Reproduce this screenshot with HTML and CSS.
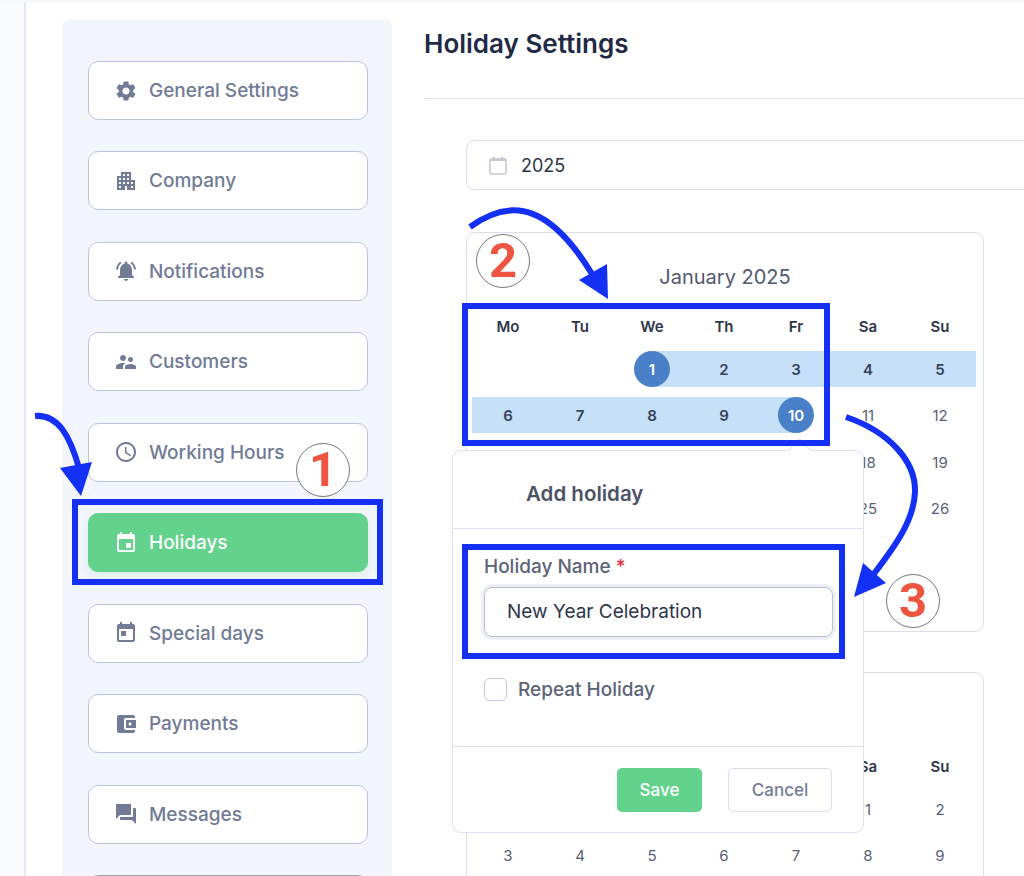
FILE: index.html
```html
<!DOCTYPE html>
<html lang="en">
    <head>
        <meta charset="UTF-8" />
        <meta name="viewport" content="width=device-width, initial-scale=1.0" />
        <title>Holiday Settings</title>
        <link rel="stylesheet" href="styles.css">
    </head>
    <body>
        <div class="page">
            <div class="strip"></div>

            <!-- sidebar -->
            <nav class="side">
                <a class="side-item">
                    <svg class="ico" viewBox="0 0 24 24"><path d="M19.14 12.94c.04-.3.06-.61.06-.94 0-.32-.02-.64-.07-.94l2.03-1.58c.18-.14.23-.41.12-.61l-1.92-3.32c-.12-.22-.37-.29-.59-.22l-2.39.96c-.5-.38-1.03-.7-1.62-.94l-.36-2.54c-.04-.24-.24-.41-.48-.41h-3.84c-.24 0-.43.17-.47.41l-.36 2.54c-.59.24-1.13.57-1.62.94l-2.39-.96c-.22-.08-.47 0-.59.22L2.74 8.87c-.12.21-.08.47.12.61l2.03 1.58c-.05.3-.09.63-.09.94s.02.64.07.94l-2.03 1.58c-.18.14-.23.41-.12.61l1.92 3.32c.12.22.37.29.59.22l2.39-.96c.5.38 1.03.7 1.62.94l.36 2.54c.05.24.24.41.48.41h3.84c.24 0 .44-.17.47-.41l.36-2.54c.59-.24 1.13-.56 1.62-.94l2.39.96c.22.08.47 0 .59-.22l1.92-3.32c.12-.22.07-.47-.12-.61l-2.01-1.58zM12 15.6c-1.98 0-3.6-1.62-3.6-3.6s1.62-3.6 3.6-3.6 3.6 1.62 3.6 3.6-1.62 3.6-3.6 3.6z"/></svg>
                    General Settings
                </a>
                <a class="side-item">
                    <svg class="ico" viewBox="0 0 24 24"><path d="M17 11V3H7v4H3v14h8v-4h2v4h8V11h-4zM7 19H5v-2h2v2zm0-4H5v-2h2v2zm0-4H5V9h2v2zm4 4H9v-2h2v2zm0-4H9V9h2v2zm0-4H9V5h2v2zm4 8h-2v-2h2v2zm0-4h-2V9h2v2zm0-4h-2V5h2v2zm4 12h-2v-2h2v2zm0-4h-2v-2h2v2z"/></svg>
                    Company
                </a>
                <a class="side-item">
                    <svg class="ico" viewBox="0 0 24 24"><path d="M7.58 4.08 6.15 2.65C3.75 4.48 2.17 7.3 2.03 10.5h2c.15-2.65 1.51-4.97 3.55-6.42zm12.39 6.42h2c-.15-3.2-1.73-6.02-4.12-7.85l-1.42 1.43c2.02 1.45 3.39 3.77 3.54 6.42zM18 11c0-3.07-1.64-5.64-4.5-6.32V4c0-.83-.67-1.5-1.5-1.5s-1.5.67-1.5 1.5v.68C7.63 5.36 6 7.92 6 11v5l-2 2v1h16v-1l-2-2v-5zm-6 11c.14 0 .27-.01.4-.04.65-.14 1.18-.58 1.44-1.18.1-.24.15-.5.15-.78h-4c.01 1.1.9 2 2.01 2z"/></svg>
                    Notifications
                </a>
                <a class="side-item">
                    <svg class="ico" viewBox="0 0 24 24"><path d="M16.5 12c1.38 0 2.49-1.12 2.49-2.5S17.88 7 16.5 7C15.12 7 14 8.12 14 9.5s1.12 2.5 2.5 2.5zM9 11c1.66 0 2.99-1.34 2.99-3S10.66 5 9 5C7.34 5 6 6.34 6 8s1.34 3 3 3zm7.5 3c-1.83 0-5.5.92-5.5 2.75V19h11v-2.25c0-1.83-3.67-2.75-5.5-2.75zM9 13c-2.33 0-7 1.17-7 3.5V19h7v-2.25c0-.85.33-2.34 2.37-3.47C10.5 13.1 9.66 13 9 13z"/></svg>
                    Customers
                </a>
                <a class="side-item">
                    <svg class="ico" viewBox="0 0 24 24"><path d="M11.99 2C6.47 2 2 6.48 2 12s4.47 10 9.99 10C17.52 22 22 17.52 22 12S17.52 2 11.99 2zM12 20c-4.42 0-8-3.58-8-8s3.58-8 8-8 8 3.58 8 8-3.58 8-8 8zm.5-13H11v6l5.25 3.15.75-1.23-4.5-2.67z"/></svg>
                    Working Hours
                </a>
                <a class="side-item active">
                    <svg class="ico" viewBox="0 0 24 24"><path d="M17 12h-5v5h5v-5zM16 1v2H8V1H6v2H5c-1.11 0-1.99.9-1.99 2L3 19c0 1.1.89 2 2 2h14c1.1 0 2-.9 2-2V5c0-1.1-.9-2-2-2h-1V1h-2zm3 18H5V8h14v11z"/></svg>
                    Holidays
                </a>
                <a class="side-item">
                    <svg class="ico" viewBox="0 0 24 24"><path d="M19 3h-1V1h-2v2H8V1H6v2H5c-1.11 0-1.99.9-1.99 2L3 19c0 1.1.89 2 2 2h14c1.1 0 2-.9 2-2V5c0-1.1-.9-2-2-2zm0 16H5V8h14v11zM7 10h5v5H7z"/></svg>
                    Special days
                </a>
                <a class="side-item">
                    <svg class="ico" viewBox="0 0 24 24"><path d="M21 18v1c0 1.1-.9 2-2 2H5c-1.11 0-2-.9-2-2V5c0-1.1.89-2 2-2h14c1.1 0 2 .9 2 2v1h-9c-1.11 0-2 .9-2 2v8c0 1.1.89 2 2 2h9zm-9-2h10V8H12v8zm4-2.5c-.83 0-1.5-.67-1.5-1.5s.67-1.5 1.5-1.5 1.5.67 1.5 1.5-.67 1.5-1.5 1.5z"/></svg>
                    Payments
                </a>
                <a class="side-item">
                    <svg class="ico" viewBox="0 0 24 24"><path d="M21 6h-2v9H6v2c0 .55.45 1 1 1h11l4 4V7c0-.55-.45-1-1-1zm-4 6V3c0-.55-.45-1-1-1H3c-.55 0-1 .45-1 1v14l4-4h10c.55 0 1-.45 1-1z"/></svg>
                    Messages
                </a>
                <a class="side-item side-item-last"></a>
            </nav>

            <!-- main -->
            <main class="main">
                <h1 class="title">Holiday Settings</h1>
                <div class="content">
                    <div class="year-input">
                        <svg class="year-ico" viewBox="0 0 18 19"><path class="year-ico-top" d="M1 5V4c0-1 .6-1.6 1.6-1.6H4V.5h1.6v1.9h6.8V.5H14v1.9h1.4C16.4 2.4 17 3 17 4v1z"/><rect class="year-ico-box" x="1" y="3" width="16" height="15" rx="1.6"/></svg>
                        2025
                    </div>

                    <section class="cal">
                        <div class="cal-title">January 2025</div>
                        <div class="cal-head"><span>Mo</span><span>Tu</span><span>We</span><span>Th</span><span>Fr</span><span>Sa</span><span>Su</span></div>
                        <!-- days under the popup are left empty -->
                        <div class="cal-days">
                            <span></span><span></span>
                            <span class="range-start sel"><b>1</b></span>
                            <span class="range">2</span><span class="range">3</span><span class="range">4</span><span class="range">5</span>
                            <span class="range">6</span><span class="range">7</span><span class="range">8</span><span class="range">9</span>
                            <span class="range-end sel"><b>10</b></span>
                            <span>11</span><span>12</span>
                            <span></span><span></span><span></span><span></span><span></span><span>18</span><span>19</span>
                            <span></span><span></span><span></span><span></span><span></span><span>25</span><span>26</span>
                            <span></span>
                        </div>
                    </section>

                    <section class="cal cal-next">
                        <div class="cal-title"></div>
                        <div class="cal-head"><span></span><span></span><span></span><span></span><span></span><span>Sa</span><span>Su</span></div>
                        <div class="cal-days">
                            <span></span><span></span><span></span><span></span><span></span>
                            <span>1</span><span>2</span>
                            <span>3</span><span>4</span><span>5</span><span>6</span><span>7</span><span>8</span><span>9</span>
                        </div>
                    </section>
                </div>
            </main>
        </div>

        <!-- popup -->
        <div class="popup">
            <div class="popup-head">Add holiday</div>
            <div class="popup-body">
                <label class="field-label">Holiday Name <i>*</i></label>
                <div class="field-input">New Year Celebration</div>
                <div class="check-row"><span class="check"></span>Repeat Holiday</div>
            </div>
            <div class="popup-foot">
                <button class="btn btn-save">Save</button>
                <button class="btn btn-cancel">Cancel</button>
            </div>
        </div>

        <!-- annotations on top of the screenshot -->
        <div class="mark mark-1"></div>
        <div class="mark mark-2"></div>
        <div class="mark mark-3"></div>
        <div class="step step-1">1</div>
        <div class="step step-2">2</div>
        <div class="step step-3">3</div>
        <svg class="arrows" viewBox="0 0 1024 876">
            <path class="arrow-line" d="M35 416C58 414 70 436 79 468"/>
            <path class="arrow-head" d="M60 468 92 462 81 496z"/>
            <path class="arrow-line" d="M470 227C515 194 553 210 592 274"/>
            <path class="arrow-head" d="M579 280 607 264 608 299z"/>
            <path class="arrow-line" d="M846 417C890 432 916 462 915 492C914 520 896 545 873 575"/>
            <path class="arrow-head" d="M863 563 886 583 854 597z"/>
        </svg>
    </body>
</html>
```

FILE: styles.css
```css
* {
    margin: 0;
    padding: 0;
    box-sizing: border-box;
}
html,
body {
    height: 876px;
    overflow: hidden;
}
body {
    position: relative;
    background: #fefefe;
    font-family: Inter, "Liberation Sans", sans-serif;
    color: #4b5365;
}

.page {
    display: flex;
    height: 876px;
    overflow: hidden;
    border-top: 3px solid #f7f8fa;
}
.strip {
    flex: 0 0 26px;
    background: #fafbfe;
    border-right: 2px solid #e1e8f6;
}

/* sidebar */
.side {
    flex: 0 0 330px;
    margin: 17px 0 0 36px;
    padding: 41px 24px 0 26px;
    background: #f3f5fd;
    border-radius: 7px 7px 0 0;
    display: flex;
    flex-direction: column;
    gap: 31.45px;
}
.side-item {
    flex: 0 0 59px;
    display: flex;
    align-items: center;
    gap: 11px;
    padding-left: 25px;
    background: #fefefe;
    border: 1px solid #bcc4dc;
    border-radius: 10px;
    color: #717b95;
    font-size: 19px;
    font-weight: 500;
}
.side-item .ico {
    width: 24px;
    height: 24px;
    fill: #717b95;
}
.side-item.active {
    background: #62d28d;
    border-color: #62d28d;
    color: #fff;
    box-shadow: 0 3px 8px rgba(98, 210, 141, 0.2);
}
.side-item.active .ico {
    fill: #fff;
}
.side-item-last {
    border-color: #9aa2b8;
}

/* main */
.main {
    flex: 1;
    min-width: 0;
    margin-left: 32px;
}
.title {
    padding: 25px 0 38px;
    border-bottom: 1px solid #e3e7f3;
    font-size: 26px;
    line-height: 32px;
    font-weight: 600;
    color: #1f2a44;
}
.content {
    padding: 41px 0 0 42px;
}
.year-input {
    width: 700px;
    height: 50px;
    display: flex;
    align-items: center;
    gap: 14px;
    padding-left: 22px;
    border: 1px solid #d9deee;
    border-radius: 8px;
    font-size: 18px;
    color: #2e364b;
}
.year-ico {
    width: 18px;
    height: 19px;
}
.year-ico-top {
    fill: #c5c8d2;
}
.year-ico-box {
    fill: none;
    stroke: #c5c8d2;
    stroke-width: 1.5;
}

/* calendars */
.cal {
    width: 518px;
    margin-top: 42px;
    padding: 32px 6px 59px;
    border: 1px solid #d9deee;
    border-radius: 9px;
}
.cal-next {
    margin-top: 40px;
}
.cal-title {
    height: 24px;
    text-align: center;
    font-size: 20px;
    line-height: 24px;
    color: #525a70;
    margin-bottom: 25px;
}
.cal-head,
.cal-days {
    display: grid;
    grid-template-columns: repeat(7, 72px);
    margin-left: -1px;
    text-align: center;
}
.cal-head {
    height: 26px;
    line-height: 26px;
    margin-bottom: 11px;
    font-size: 15px;
    font-weight: 600;
    color: #2e364b;
}
.cal-days {
    grid-auto-rows: 36px;
    row-gap: 10.3px;
    font-size: 15px;
    line-height: 37px;
    color: #596175;
}
.range {
    background: #c5e0f7;
    font-weight: 600;
    color: #38425a;
}
.range-start {
    background: linear-gradient(to right, transparent 50%, #c5e0f7 50%);
}
.range-end {
    background: linear-gradient(to right, #c5e0f7 50%, transparent 50%);
}
.sel b {
    display: block;
    width: 36px;
    height: 36px;
    margin: 0 auto;
    border-radius: 50%;
    background: #4a80c8;
    color: #fff;
    font-weight: 600;
}

/* popup */
.popup {
    position: absolute;
    left: 452px;
    top: 450px;
    width: 412px;
    height: 383px;
    display: flex;
    flex-direction: column;
    background: #fefefe;
    border: 1px solid #dde1ef;
    border-radius: 9px;
}
.popup::before {
    content: "";
    position: absolute;
    left: 338px;
    top: -9px;
    width: 16px;
    height: 16px;
    background: #fefefe;
    border: 1px solid #dde1ef;
    border-right: none;
    border-bottom: none;
    transform: rotate(45deg);
}
.popup-head {
    position: relative;
    height: 78px;
    padding: 30px 0 0 73px;
    border-bottom: 1px solid #dde1ef;
    font-size: 20.5px;
    line-height: 26px;
    font-weight: 600;
    color: #4b5365;
}
.popup-body {
    flex: 1;
    padding: 26px 30px 0 31px;
}
.field-label {
    display: block;
    font-size: 19px;
    line-height: 24px;
    font-weight: 500;
    color: #5c6478;
}
.field-label i {
    color: #e3343f;
    font-style: normal;
}
.field-input {
    height: 50px;
    margin-top: 8px;
    padding-left: 22px;
    border: 1px solid #b9bfd6;
    border-radius: 8px;
    box-shadow: 0 0 0 3px #eff0f6;
    font-size: 19px;
    line-height: 47px;
    color: #2e364b;
}
.check-row {
    display: flex;
    align-items: center;
    gap: 11px;
    margin-top: 41px;
    font-size: 19px;
    font-weight: 500;
    color: #5c6478;
}
.check {
    width: 23px;
    height: 23px;
    border: 1px solid #c4cade;
    border-radius: 5px;
}
.popup-foot {
    height: 86px;
    display: flex;
    justify-content: flex-end;
    gap: 26px;
    padding: 21px 31px 0 0;
    border-top: 1px solid #dde1ef;
}
.btn {
    height: 44px;
    border-radius: 5px;
    font-family: inherit;
    font-size: 17px;
    font-weight: 500;
}
.btn-save {
    width: 85px;
    background: #62d28d;
    border: none;
    color: #fff;
}
.btn-cancel {
    width: 104px;
    background: #fefefe;
    border: 1px solid #d9deee;
    color: #737d96;
}

/* annotations */
.mark {
    position: absolute;
    border: 6px solid #1430f5;
}
.mark-1 {
    left: 72px;
    top: 499px;
    width: 311px;
    height: 86px;
}
.mark-2 {
    left: 462px;
    top: 303px;
    width: 368px;
    height: 143px;
}
.mark-3 {
    left: 462px;
    top: 544px;
    width: 383px;
    height: 115px;
}
.step {
    position: absolute;
    width: 54px;
    height: 54px;
    border: 1.5px solid #77797c;
    border-radius: 50%;
    background: #fefefe;
    text-align: center;
    font-family: Roboto, "Liberation Sans", sans-serif;
    font-size: 49px;
    line-height: 51px;
    font-weight: 700;
    color: #ee5540;
}
.step-1 {
    left: 296px;
    top: 443px;
}
.step-2 {
    left: 476px;
    top: 234px;
}
.step-3 {
    left: 886px;
    top: 574px;
}
.arrows {
    position: absolute;
    left: 0;
    top: 0;
    width: 1024px;
    height: 876px;
    pointer-events: none;
}
.arrow-line {
    fill: none;
    stroke: #1430f5;
    stroke-width: 6;
}
.arrow-head {
    fill: #1430f5;
}
```
